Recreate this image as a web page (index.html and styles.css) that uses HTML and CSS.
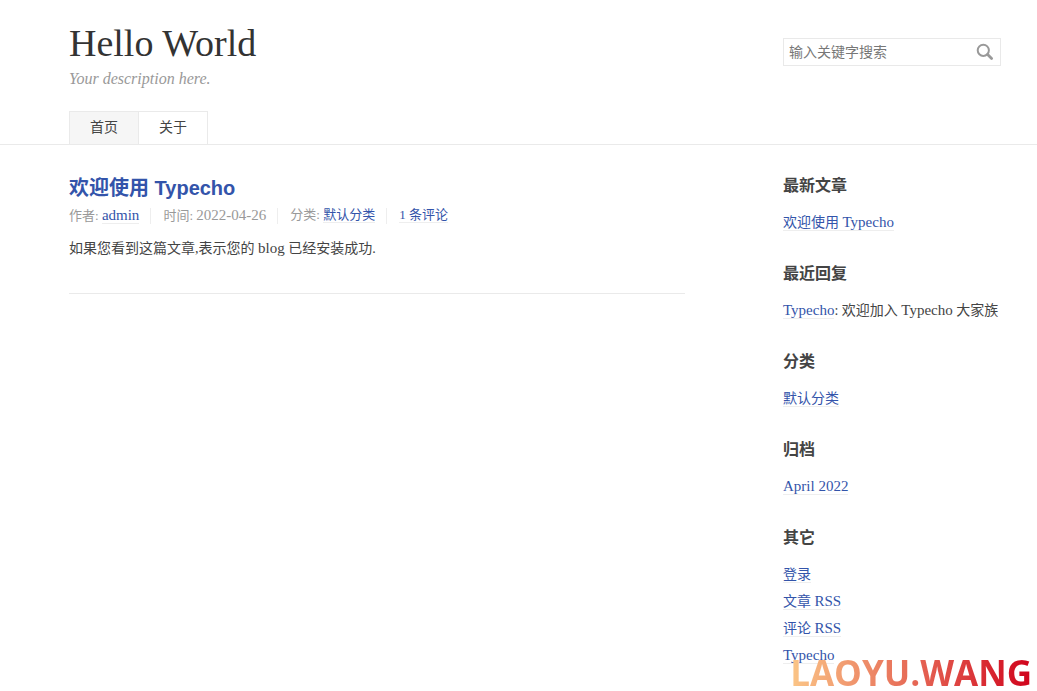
FILE: index.html
```html
<!DOCTYPE html>
<html lang="zh">
<head>
<meta charset="utf-8">
<title>Hello World</title>
<meta name="viewport" content="width=device-width, initial-scale=1">
<link rel="stylesheet" href="styles.css">
</head>
<body>
<header class="site-header">
  <div class="container header-grid">
    <div class="brand">
      <a class="logo" href="#">Hello World</a>
      <p class="description">Your description here.</p>
    </div>
    <form class="search" role="search">
      <input class="search-input" type="text" aria-label="输入关键字搜索" placeholder="输入关键字搜索">
      <button class="search-button" type="button" aria-label="搜索">
        <svg width="18" height="18" viewBox="0 0 18 18" fill="none" stroke="#999"><circle cx="7.3" cy="7.3" r="5.6" stroke-width="2"/><path d="M11.6 11.6L15.6 15.6" stroke-width="2.8" stroke-linecap="round"/></svg>
      </button>
    </form>
  </div>
  <nav class="container nav">
    <a class="nav-link current" href="#">首页</a>
    <a class="nav-link" href="#">关于</a>
  </nav>
</header>
<div class="container layout">
  <main>
    <article class="post">
      <h2 class="post-title"><a href="#">欢迎使用 Typecho</a></h2>
      <ul class="meta">
        <li>作者: <a class="link" href="#"><span class="latin">admin</span></a></li>
        <li>时间: <time class="latin">2022-04-26</time></li>
        <li>分类: <a class="link" href="#">默认分类</a></li>
        <li><a class="link" href="#">1 条评论</a></li>
      </ul>
      <p class="post-content">如果您看到这篇文章,表示您的 <span class="latin">blog</span> 已经安装成功.</p>
    </article>
  </main>
  <aside>
    <section class="widget">
      <h3>最新文章</h3>
      <ul><li><a class="link" href="#">欢迎使用 <span class="latin">Typecho</span></a></li></ul>
    </section>
    <section class="widget">
      <h3>最近回复</h3>
      <ul><li><a class="link" href="#"><span class="latin">Typecho</span></a>: 欢迎加入 <span class="latin">Typecho</span> 大家族</li></ul>
    </section>
    <section class="widget">
      <h3>分类</h3>
      <ul><li><a class="link" href="#">默认分类</a></li></ul>
    </section>
    <section class="widget">
      <h3>归档</h3>
      <ul><li><a class="link" href="#"><span class="latin">April 2022</span></a></li></ul>
    </section>
    <section class="widget">
      <h3>其它</h3>
      <ul>
        <li><a class="link" href="#">登录</a></li>
        <li><a class="link" href="#">文章 <span class="latin">RSS</span></a></li>
        <li><a class="link" href="#">评论 <span class="latin">RSS</span></a></li>
        <li><a class="link" href="#"><span class="latin">Typecho</span></a></li>
      </ul>
    </section>
  </aside>
</div>
<div class="watermark">LAOYU.WANG</div>
</body>
</html>
```
FILE: styles.css
```css
* { box-sizing: border-box; }
body {
  margin: 0;
  background: #fff;
  color: #444;
  font: 14px/21px "Liberation Serif", "Noto Sans CJK SC", serif;
}
a { color: #3354aa; text-decoration: none; }
ul { list-style: none; margin: 0; padding: 0; }
p, h2, h3 { margin: 0; }
.container { padding: 0 36px 0 69px; }
.latin { font-size: 15px; }
.link { border-bottom: 1px solid #eee; }

.site-header { border-bottom: 1px solid #eaeaea; padding-top: 20px; }
.header-grid, .layout {
  display: grid;
  grid-template-columns: minmax(0, 616fr) minmax(218px, 218fr);
  column-gap: 98px;
}
.logo { display: block; color: #333; font-size: 38px; line-height: 46px; }
.description { color: #999; font-size: 16px; font-style: italic; line-height: 21px; margin-top: 2px; }
.search { display: flex; height: 28px; margin-top: 18px; border: 1px solid #e9e9e9; }
.search-input {
  flex: 1;
  min-width: 0;
  border: 0;
  padding: 0 5px 2px;
  background: none;
  color: #444;
  font: 14px "Noto Sans CJK SC", sans-serif;
}
.search-input::placeholder { color: #777; }
.search-button { display: flex; align-items: center; border: 0; background: none; padding: 0 6px; }

.nav { display: flex; margin-top: 22px; }
.nav-link {
  border: 1px solid #eaeaea;
  border-bottom: 0;
  padding: 0 20px;
  color: #444;
  line-height: 32px;
}
.nav-link + .nav-link { border-left: 0; }
.nav-link.current { background: #f6f6f6; }

.layout { padding-top: 28px; }
.post { border-bottom: 1px solid #eaeaea; padding-bottom: 34px; }
.post-title { font: bold 20px/30px "Liberation Sans", "Noto Sans CJK SC", sans-serif; }
.meta { display: flex; color: #999; font-size: 13px; line-height: 20px; margin-top: 2px; }
.meta li + li {
  margin-left: 11px;
  padding-left: 13px;
  background: linear-gradient(#eee, #eee) left center / 1px 16px no-repeat;
}
.post-content { margin-top: 12px; }

.widget { margin-bottom: 26px; }
.widget h3 { font: bold 16px/26px "Liberation Sans", "Noto Sans CJK SC", sans-serif; }
.widget ul { margin-top: 11px; }
.widget li { line-height: 25px; }
.widget li + li { margin-top: 2px; }
.widget:last-child { margin-bottom: 0; }

.watermark {
  position: absolute;
  right: 5px;
  bottom: 0;
  font: bold 35px/36px "Open Sans", sans-serif;
  color: transparent;
  background: linear-gradient(90deg, #fbc687, #e2574c 60%, #d0021b);
  background-clip: text;
  pointer-events: none;
}
```
